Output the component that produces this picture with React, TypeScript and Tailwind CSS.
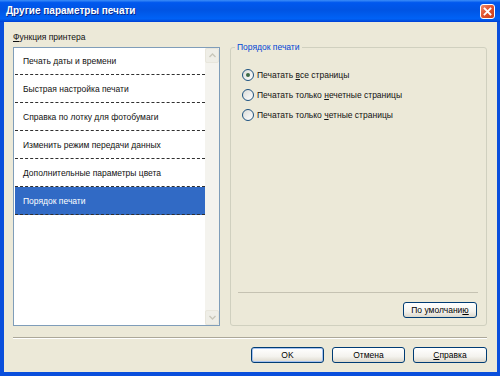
const items = [
  "Печать даты и времени",
  "Быстрая настройка печати",
  "Справка по лотку для фотобумаги",
  "Изменить режим передачи данных",
  "Дополнительные параметры цвета",
  "Порядок печати",
];

const XpButton = ({
  children,
  isDefault = false,
  className = "",
}: {
  children: React.ReactNode;
  isDefault?: boolean;
  className?: string;
}) => (
  <button
    className={`h-[16px] rounded-[3px] border border-[#003c74] bg-[linear-gradient(to_bottom,#ffffff,#f4f3ee_60%,#dcd8cc)] text-[8.5px] leading-[14px] text-black ${
      isDefault ? "shadow-[inset_0_0_0_1px_#a6c2f0]" : ""
    } ${className}`}
  >
    {children}
  </button>
);

const Radio = ({ checked, children }: { checked?: boolean; children: React.ReactNode }) => (
  <div className="flex h-[20px] items-center gap-[3px]">
    <span className="flex h-[12px] w-[12px] items-center justify-center rounded-full border border-[#1c5180] bg-[linear-gradient(135deg,#dcdcd7,#ffffff)]">
      {checked && <span className="h-[4px] w-[4px] rounded-full bg-[#3d6a45]" />}
    </span>
    <span className="text-[8.5px] leading-[12px] text-[#111]">{children}</span>
  </div>
);

export default function App() {
  return (
    <div className="flex h-[376px] w-[500px] flex-col bg-[#0a4fdc] font-['Liberation_Sans',Arial,sans-serif]">
      {/* Title bar */}
      <div className="flex h-[22px] shrink-0 items-center justify-between bg-[linear-gradient(to_bottom,#3c8ef8_0%,#0058ee_12%,#0054e3_45%,#0062f6_85%,#0050e0_94%,#003dd7_100%)] pl-[6px] pr-[5px]">
        <span className="text-[10px] font-bold leading-[12px] text-white [text-shadow:1px_1px_0_#0a2a8a]">
          Другие параметры печати
        </span>
        <div className="flex h-[15px] w-[15px] items-center justify-center rounded-[3px] border border-white bg-[linear-gradient(135deg,#f08a6a,#e0512c_50%,#c8401c)]">
          <svg width="9" height="9" viewBox="0 0 9 9">
            <path d="M1.5 1.5 L7.5 7.5 M7.5 1.5 L1.5 7.5" stroke="white" strokeWidth="1.8" strokeLinecap="square" />
          </svg>
        </div>
      </div>

      {/* Body */}
      <div className="flex flex-1 flex-col border-b-4 border-l-4 border-r-[3px] border-[#0a4fdc] bg-[#ece9d8] pl-[9px] pr-[10px] pt-[9px]">
        <div className="flex gap-[10px]">
          {/* Left: printer functions */}
          <div className="flex w-[207px] flex-col">
            <div className="mb-[4px] h-[12px] text-[8.5px] leading-[12px] text-[#111]">
              <span className="underline">Ф</span>ункция принтера
            </div>
            <div className="flex h-[279px] border border-[#7f9db9] bg-white">
              <div className="flex flex-1 flex-col pl-[1px]">
                {items.map((item, i) => {
                  const selected = i === items.length - 1;
                  return (
                    <div
                      key={item}
                      className={`flex items-center border-b border-dashed border-[#303030] pl-[8px] text-[8.5px] leading-[12px] ${
                        i === 0 ? "h-[27px]" : "h-[28px]"
                      } ${selected ? "bg-[#316ac5] text-white" : "text-[#111]"}`}
                    >
                      {item}
                    </div>
                  );
                })}
              </div>
              {/* Disabled scrollbar */}
              <div className="flex w-[14px] flex-col justify-between bg-[#f4f3ee]">
                <div className="flex h-[15px] items-center justify-center rounded-[2px] border border-[#e8e6dc] bg-[#efeee7]">
                  <svg width="7" height="5" viewBox="0 0 7 5">
                    <path d="M0.5 4 L3.5 1 L6.5 4" fill="none" stroke="#c9c7ba" strokeWidth="1.4" />
                  </svg>
                </div>
                <div className="flex h-[15px] items-center justify-center rounded-[2px] border border-[#e8e6dc] bg-[#efeee7]">
                  <svg width="7" height="5" viewBox="0 0 7 5">
                    <path d="M0.5 1 L3.5 4 L6.5 1" fill="none" stroke="#c9c7ba" strokeWidth="1.4" />
                  </svg>
                </div>
              </div>
            </div>
          </div>

          {/* Right: print order group */}
          <div className="flex flex-1 flex-col pt-[16px]">
            <div className="relative flex h-[279px] flex-col rounded-[3px] border border-[#d0d0bf] pl-[11px] pt-[17px]">
              <span className="absolute -top-[7px] left-[4px] bg-[#ece9d8] px-[2px] text-[8.5px] leading-[12px] text-[#0046d5]">
                Порядок печати
              </span>
              <Radio checked>
                Печатать <span className="underline">в</span>се страницы
              </Radio>
              <Radio>
                Печатать только <span className="underline">н</span>ечетные страницы
              </Radio>
              <Radio>
                Печатать только <span className="underline">ч</span>етные страницы
              </Radio>
              <div className="flex-1" />
              <div className="mr-[8px] -ml-[4px] h-px bg-[#c5c2b2]" />
              <div className="mb-[7px] mt-[9px] flex justify-end pr-[9px]">
                <XpButton className="w-[74px]">
                  По умолчани<span className="underline">ю</span>
                </XpButton>
              </div>
            </div>
          </div>
        </div>

        {/* Separator */}
        <div className="mt-[11px] h-[2px] border-b border-t border-b-white border-t-[#aca899]" />

        {/* Dialog buttons */}
        <div className="mt-[8px] flex justify-end gap-[8px]">
          <XpButton isDefault className="w-[73px]">
            OK
          </XpButton>
          <XpButton className="w-[73px]">Отмена</XpButton>
          <XpButton className="w-[74px]">
            <span className="underline">С</span>правка
          </XpButton>
        </div>
      </div>
    </div>
  );
}
